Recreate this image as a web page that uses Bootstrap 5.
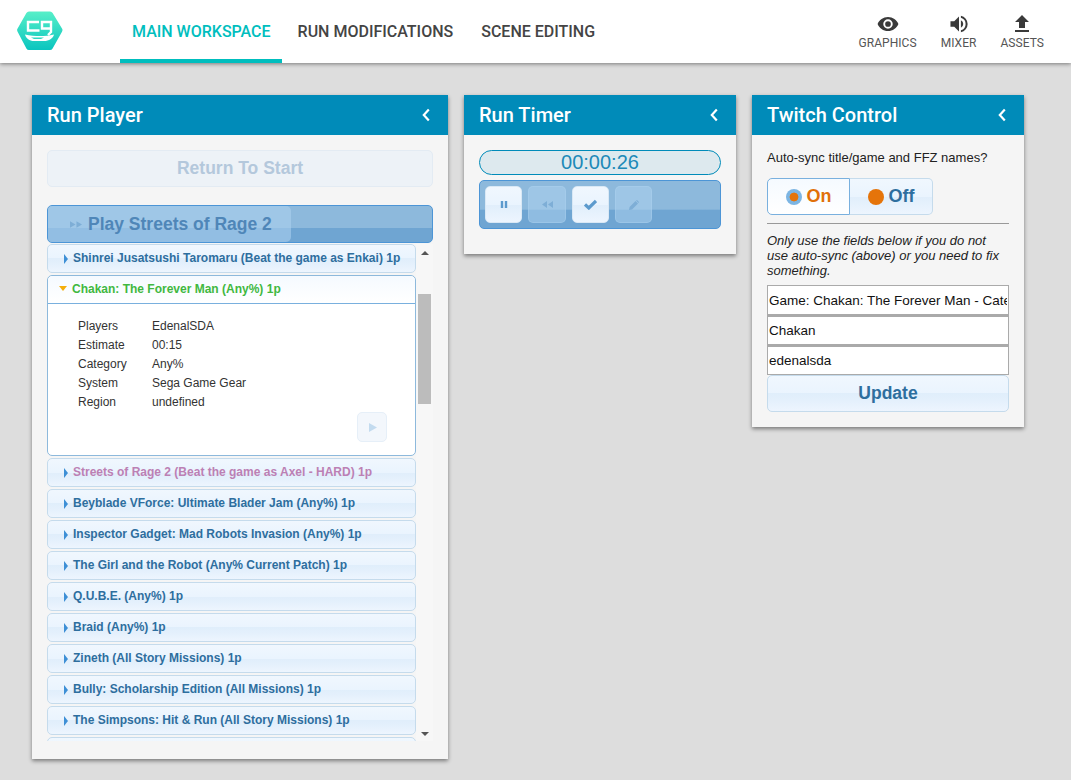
<!DOCTYPE html>
<html lang="en"><head><meta charset="utf-8"><title>NodeCG</title>
<link href="https://cdn.jsdelivr.net/npm/bootstrap@5.3.0/dist/css/bootstrap.min.css" rel="stylesheet">
<style>
html,body{height:100%}
body{background:#ddd;font-family:"Liberation Sans",Arial,sans-serif;font-size:12px;color:#222;overflow:hidden}
.topbar{height:63px;background:#fff;box-shadow:0 1px 4px rgba(0,0,0,.45);padding:0}
.logo-box{width:120px;padding-left:17px}
.tab-link{font:500 16px/1 Roboto,sans-serif;color:#444;height:63px;padding:4px 14px 0;display:flex;align-items:center;border-bottom:4px solid transparent;text-decoration:none}
.tab-link.on{color:#00bebe;border-bottom-color:#00bebe;padding-left:12px;padding-right:11.5px;margin-right:1.5px}
.tool-link{font:400 12px/1 Roboto,sans-serif;color:#555;display:flex;flex-direction:column;align-items:center;text-decoration:none;gap:4px;padding-top:1px;letter-spacing:.05px}
.tools-box{gap:24px;padding-right:27px}
.board{padding:32px 0 0 32px;gap:16px;align-items:flex-start}
.pane{background:#f5f5f5;box-shadow:0 2px 4px rgba(0,0,0,.45);flex:none}
.w-player{width:416px;height:664px}.w-small{width:272px}
.pane-head{height:40px;background:#008bb9;color:#fff;font:500 20px/40px Roboto,sans-serif;padding:0 18px 0 15px;display:flex;justify-content:space-between;align-items:center}
.pane-body{padding:15px}
.ui-b{background:linear-gradient(#f0f7fe 0,#eaf4fe 50%,#e0eefb 50%,#e4f0fc 70%,#edf5fe 100%);border:1px solid #c5dbec;border-radius:5px;color:#2e6e9e;font-weight:700}
.ret{height:37px;font-size:17.5px;line-height:35px;text-align:center;color:#b4c8dc;background:#edf2f7;border-color:#e3ebf3;margin-bottom:18px}
.play{height:38px;position:relative;background:linear-gradient(#8db9dc 0,#8db9dc 60%,#6fa5d2 62%,#6fa5d2 100%);border:1px solid #4c95d6;overflow:hidden}
.play-fill{width:243px;height:100%;background:rgba(175,212,240,.55);border-radius:0 5px 5px 0;display:flex;align-items:center;padding-left:22px;color:#4f86b8;font-size:17.5px;font-weight:700;gap:6px}
.lst{height:497px;margin-top:1px;overflow:hidden}
.lst-items{width:369px;flex:none;overflow:hidden}
.it{height:29px;margin-bottom:2px;font-size:12px;line-height:27px;padding-left:15px;display:flex;align-items:center;gap:4px;white-space:nowrap}
.it .arr{width:0;height:0;border-left:4px solid #3d8fd6;border-top:5px solid transparent;border-bottom:5px solid transparent;margin-right:1px;margin-left:1px}
.it.pur{color:#bc80b4}
.open{background:#fff;border:1px solid #8db9dc;border-radius:5px;margin-bottom:2px;height:181px}
.open-h{height:28px;background:linear-gradient(#f5faff,#fff);border-bottom:1px solid #79b0de;color:#41b83f;font-weight:700;display:flex;align-items:center;padding:0 0 2px 11px;gap:5px;border-radius:5px 5px 0 0}
.open-h .arr{width:0;height:0;border-top:5px solid #f5ae0a;border-left:4.5px solid transparent;border-right:4.5px solid transparent}
.det{padding:13px 0 0 30px;line-height:19px;color:#333}
.det-k{width:74px;display:inline-block}
.mini{width:30px;height:30px;background:#f3f7fc;border:1px solid #e6eff8;border-radius:5px;display:flex;align-items:center;justify-content:center;margin:0 0 0 309px}
.sb{width:17px;background:#f7f7f7;display:flex;flex-direction:column;align-items:center;flex:none;position:relative}
.sb-up{width:0;height:0;border-bottom:4px solid #555;border-left:4px solid transparent;border-right:4px solid transparent;margin-top:7px}
.sb-th{width:13px;height:110px;background:#bcbcbc;margin-top:39px}
.sb-dn{width:0;height:0;border-top:4px solid #555;border-left:4px solid transparent;border-right:4px solid transparent;margin-top:auto;margin-bottom:5px}
.clock{height:25px;border:1px solid #008bb9;border-radius:13px;background:#dde9ee;color:#2089b8;font-size:20px;line-height:23px;text-align:center}
.bar{height:49px;margin-top:5px;background:linear-gradient(#8db9dc 0,#8db9dc 60%,#6fa5d2 62%,#6fa5d2 100%);border:1px solid #4c95d6;border-radius:5px;padding:5px;gap:6px;display:flex}
.tb{width:37px;height:37px;border-radius:5px;display:flex;align-items:center;justify-content:center;background:linear-gradient(#f0f7fe 0,#eaf4fe 50%,#e0eefb 50%,#edf5fe 100%);border:1px solid #d9e8f5}
.tb.off{background:rgba(175,212,240,.5);border-color:rgba(175,212,240,.4)}
.tb.wide{width:38px}
.pad-tw{height:292px;padding:14px 15px 15px}
.qq{font-size:13px;line-height:18px}
.seg{margin-top:11px;display:flex;margin-bottom:8px}
.seg-b{width:83px;height:37px;display:flex;align-items:center;justify-content:center;gap:5px;font-size:18px;font-weight:700;border:1px solid #c5dbec;color:#2e6e9e;background:linear-gradient(#f0f7fe 0,#eaf4fe 50%,#e0eefb 50%,#edf5fe 100%)}
.seg-b.act{background:linear-gradient(#f5faff,#fff);border-color:#79b0de;border-radius:5px 0 0 5px;color:#e17009}
.seg-b.rest{border-left:0;border-radius:0 5px 5px 0}
.dot{width:16px;height:16px;border-radius:50%;background:#e5740a}
.dot.sel{background:radial-gradient(#e5740a 0,#e5740a 36%,#7cb5e3 42%,#7cb5e3 100%)}
.rule{height:1px;background:#999;margin:0 0 9px}
.note{font-style:italic;font-size:13px;line-height:15px;margin-bottom:7px;color:#222}
.fld{display:block;width:100%;height:30px;border:1px solid #aaa;border-top-width:2px;background:#fff;padding:0 1px;font:13.5px "Liberation Sans",Arial,sans-serif;color:#111;outline:0}
.fld.first{border-top-width:1px;padding-top:1px}
.upd{height:37px;text-align:center;font-size:17.500px;line-height:35px}
</style></head>
<body>
<nav class="topbar d-flex align-items-center">
  <div class="logo-box">
    <svg width="46" height="42" viewBox="0 0 46 42" class="d-block" style="margin-bottom:2px"><defs><linearGradient id="lg" x1="0" y1="0" x2="0" y2="1"><stop offset="0" stop-color="#58efc8"/><stop offset="1" stop-color="#0ac5bf"/></linearGradient></defs>
    <path d="M12 1.500h21a3 3 0 0 1 2.600 1.500l9.400 15.500a3 3 0 0 1 0 3.200L35.600 38.500a3 3 0 0 1-2.600 1.500H12a3 3 0 0 1-2.600-1.500L.6 21.700a3 3 0 0 1 0-3.200L9.400 3A3 3 0 0 1 12 1.500z" fill="url(#lg)"/>
    <path d="M22 12H11v8.500h11.500" fill="none" stroke="#fff" stroke-width="2.400"/><path d="M25 12h9v6.500h-9zM34 18.500v3.500l-3 3" fill="none" stroke="#fff" stroke-width="2.400"/><path d="M8 24.500c5 1.200 10 1.500 15 1.500s9-.5 14-1.500c-1 4-5 6.500-10 6.500H17c-4.500 0-8-2.500-9-6.500z" fill="#fff"/><path d="M14 27.500h13l-3 1.500h-7z" fill="#2dd8c2"/></svg>
  </div>
  <div class="d-flex">
    <a class="tab-link on" href="#">MAIN WORKSPACE</a>
    <a class="tab-link" href="#">RUN MODIFICATIONS</a>
    <a class="tab-link" href="#">SCENE EDITING</a>
  </div>
  <div class="d-flex ms-auto tools-box">
    <a class="tool-link" href="#"><svg width="24" height="18" viewBox="0 2.500 24 19" fill="#3a3a3a"><path d="M12 4.500C7 4.500 2.700 7.600 1 12c1.700 4.400 6 7.500 11 7.500s9.300-3.100 11-7.500c-1.700-4.400-6-7.500-11-7.500zm0 12.500a5 5 0 1 1 0-10 5 5 0 0 1 0 10zm0-8a3 3 0 1 0 0 6 3 3 0 0 0 0-6z"/></svg>GRAPHICS</a>
    <a class="tool-link" href="#"><svg width="22" height="18" viewBox="2 2.500 20 19" fill="#3a3a3a"><path d="M3 9v6h4l5 5V4L7 9H3zm13.500 3A4.500 4.500 0 0 0 14 8v8a4.500 4.500 0 0 0 2.500-4zM14 3.200v2.100a7 7 0 0 1 0 13.400v2.100a9 9 0 0 0 0-17.600z"/></svg>MIXER</a>
    <a class="tool-link" href="#"><svg width="20" height="18" viewBox="4 3 16 18" fill="#3a3a3a"><path d="M9 16h6v-6h4l-7-7-7 7h4v6zm-4 2h14v2H5v-2z"/></svg>ASSETS</a>
  </div>
</nav>
<main class="board d-flex">
  <section class="pane w-player">
    <div class="pane-head">Run Player <svg width="8" height="14" viewBox="0 0 8 14"><path d="M6.800 1.500 1.800 7l5 5.500" fill="none" stroke="#fff" stroke-width="2.200"/></svg></div>
    <div class="pane-body">
      <div class="ui-b ret">Return To Start</div>
      <div class="ui-b play"><div class="play-fill"><svg width="12" height="7" viewBox="0 0 13 7" fill="#7eaed6"><path d="M0 0l6 3.500L0 7zM7 0l6 3.500L7 7z"/></svg><span>Play Streets of Rage 2</span></div></div>
      <div class="lst d-flex">
        <div class="lst-items">
          <div class="ui-b it"><i class="arr"></i>Shinrei Jusatsushi Taromaru (Beat the game as Enkai) 1p</div>
          <div class="open">
            <div class="open-h"><i class="arr"></i>Chakan: The Forever Man (Any%) 1p</div>
            <div class="det">
              <div><span class="det-k">Players</span>EdenalSDA</div>
              <div><span class="det-k">Estimate</span>00:15</div>
              <div><span class="det-k">Category</span>Any%</div>
              <div><span class="det-k">System</span>Sega Game Gear</div>
              <div><span class="det-k">Region</span>undefined</div>
            </div>
            <div class="mini"><svg width="9" height="9" viewBox="0 0 9 9" fill="#c3dbef"><path d="M1 0l8 4.500L1 9z"/></svg></div>
          </div>
          <div class="ui-b it pur"><i class="arr"></i>Streets of Rage 2 (Beat the game as Axel - HARD) 1p</div>
          <div class="ui-b it"><i class="arr"></i>Beyblade VForce: Ultimate Blader Jam (Any%) 1p</div>
          <div class="ui-b it"><i class="arr"></i>Inspector Gadget: Mad Robots Invasion (Any%) 1p</div>
          <div class="ui-b it"><i class="arr"></i>The Girl and the Robot (Any% Current Patch) 1p</div>
          <div class="ui-b it"><i class="arr"></i>Q.U.B.E. (Any%) 1p</div>
          <div class="ui-b it"><i class="arr"></i>Braid (Any%) 1p</div>
          <div class="ui-b it"><i class="arr"></i>Zineth (All Story Missions) 1p</div>
          <div class="ui-b it"><i class="arr"></i>Bully: Scholarship Edition (All Missions) 1p</div>
          <div class="ui-b it"><i class="arr"></i>The Simpsons: Hit &amp; Run (All Story Missions) 1p</div>
          <div class="ui-b it"></div>
        </div>
        <div class="sb"><i class="sb-up"></i><div class="sb-th"></div><i class="sb-dn"></i></div>
      </div>
    </div>
  </section>
  <section class="pane w-small">
    <div class="pane-head">Run Timer <svg width="8" height="14" viewBox="0 0 8 14"><path d="M6.800 1.500 1.800 7l5 5.500" fill="none" stroke="#fff" stroke-width="2.200"/></svg></div>
    <div class="pane-body" style="height:119px">
      <div class="clock">00:00:26</div>
      <div class="bar">
        <div class="tb"><svg width="8" height="9" viewBox="0 0 8 9" fill="#5c9acd"><path d="M.8 1h2.400v7H.8zM4.800 1h2.400v7H4.800z"/></svg></div>
        <div class="tb off wide"><svg width="11" height="7" viewBox="0 0 11 7" fill="#7eaed6"><path d="M5 0v7L0 3.500zM11 0v7L6 3.500z"/></svg></div>
        <div class="tb"><svg width="13" height="11" viewBox="0 0 13 11" fill="none" stroke="#5c9acd" stroke-width="3.200"><path d="M1 5.500l3.800 3.500L12 2"/></svg></div>
        <div class="tb off"><svg width="10" height="10" viewBox="0 0 10 10" fill="#7eaed6"><path d="M0 10l.6-3L6.500 1l2.500 2.500L3 9.500zM7 .5l1-.5 2 2-.5 1z"/></svg></div>
      </div>
    </div>
  </section>
  <section class="pane w-small">
    <div class="pane-head">Twitch Control <svg width="8" height="14" viewBox="0 0 8 14"><path d="M6.800 1.500 1.800 7l5 5.500" fill="none" stroke="#fff" stroke-width="2.200"/></svg></div>
    <div class="pad-tw">
      <div class="qq">Auto-sync title/game and FFZ names?</div>
      <div class="seg"><div class="seg-b act"><i class="dot sel"></i>On</div><div class="seg-b rest"><i class="dot"></i>Off</div></div>
      <div class="rule"></div>
      <div class="note">Only use the fields below if you do not use auto-sync (above) or you need to fix something.</div>
      <input class="fld first" value="Game: Chakan: The Forever Man - Category: Any%">
      <input class="fld" value="Chakan">
      <input class="fld" value="edenalsda">
      <div class="ui-b upd">Update</div>
    </div>
  </section>
</main>
<script src="https://cdn.jsdelivr.net/npm/bootstrap@5.3.0/dist/js/bootstrap.bundle.min.js"></script>
</body></html>
